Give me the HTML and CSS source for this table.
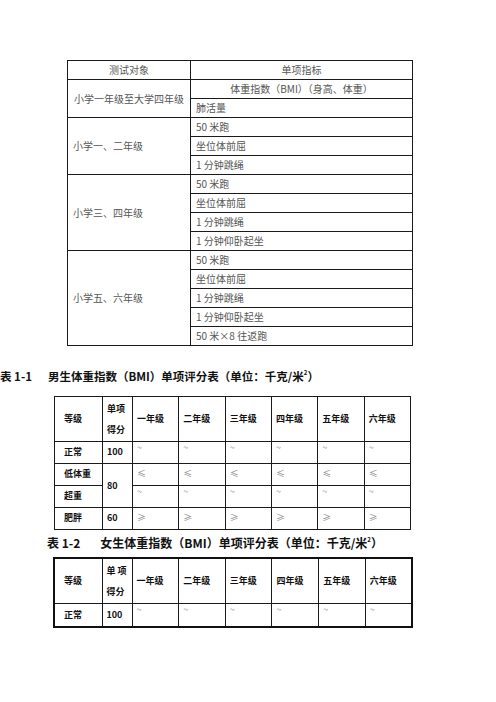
FILE: index.html
```html
<!DOCTYPE html>
<html lang="zh">
<head>
<meta charset="utf-8">
<title>体质测试</title>
<link rel="stylesheet" href="styles.css">
</head>
<body>
<table class="t1">
  <colgroup><col class="c-left"><col class="c-right"></colgroup>
  <tr><td class="ctr">测试对象</td><td class="ctr">单项指标</td></tr>
  <tr><td class="ctr" rowspan="2">小学一年级至大学四年级</td><td class="ctr">体重指数（BMI）（身高、体重）</td></tr>
  <tr><td>肺活量</td></tr>
  <tr><td rowspan="3">小学一、二年级</td><td>50 米跑</td></tr>
  <tr><td>坐位体前屈</td></tr>
  <tr><td>1 分钟跳绳</td></tr>
  <tr><td rowspan="4">小学三、四年级</td><td>50 米跑</td></tr>
  <tr><td>坐位体前屈</td></tr>
  <tr><td>1 分钟跳绳</td></tr>
  <tr><td>1 分钟仰卧起坐</td></tr>
  <tr><td rowspan="5">小学五、六年级</td><td>50 米跑</td></tr>
  <tr><td>坐位体前屈</td></tr>
  <tr><td>1 分钟跳绳</td></tr>
  <tr><td>1 分钟仰卧起坐</td></tr>
  <tr><td>50 米×8 往返跑</td></tr>
</table>

<div class="cap cap1"><span class="cap-no">表 1-1</span>男生体重指数（BMI）单项评分表（单位：千克/米<sup>2</sup>）</div>

<table class="t2">
  <colgroup><col class="g1"><col class="g2"><col class="g"><col class="g"><col class="g"><col class="g"><col class="g"><col class="g"></colgroup>
  <tr class="hd"><td class="first">等级</td><td class="two">单项<br>得分</td><td>一年级</td><td>二年级</td><td>三年级</td><td>四年级</td><td>五年级</td><td>六年级</td></tr>
  <tr><td class="first">正常</td><td>100</td><td class="v tl">~</td><td class="v tl">~</td><td class="v tl">~</td><td class="v tl">~</td><td class="v tl">~</td><td class="v tl">~</td></tr>
  <tr><td class="first">低体重</td><td rowspan="2">80</td><td class="v">≤</td><td class="v">≤</td><td class="v">≤</td><td class="v">≤</td><td class="v">≤</td><td class="v">≤</td></tr>
  <tr><td class="first">超重</td><td class="v tl">~</td><td class="v tl">~</td><td class="v tl">~</td><td class="v tl">~</td><td class="v tl">~</td><td class="v tl">~</td></tr>
  <tr><td class="first">肥胖</td><td>60</td><td class="v">≥</td><td class="v">≥</td><td class="v">≥</td><td class="v">≥</td><td class="v">≥</td><td class="v">≥</td></tr>
</table>

<div class="cap cap2"><span class="cap-no">表 1-2</span>女生体重指数（BMI）单项评分表（单位：千克/米<sup>2</sup>）</div>

<table class="t2 t3">
  <colgroup><col class="g1"><col class="g2"><col class="g"><col class="g"><col class="g"><col class="g"><col class="g"><col class="g"></colgroup>
  <tr class="hd"><td class="first">等级</td><td class="two">单 项<br>得分</td><td>一年级</td><td>二年级</td><td>三年级</td><td>四年级</td><td>五年级</td><td>六年级</td></tr>
  <tr><td class="first">正常</td><td>100</td><td class="v tl">~</td><td class="v tl">~</td><td class="v tl">~</td><td class="v tl">~</td><td class="v tl">~</td><td class="v tl">~</td></tr>
</table>
</body>
</html>
```

FILE: styles.css
```css
body {
  margin: 0;
  background: #ffffff;
  font-family: "Noto Sans CJK SC", sans-serif;
}

.t1 {
  border-collapse: collapse;
  table-layout: fixed;
  width: 346px;
  margin: 60px 0 0 67px;
  color: #555555;
  font-size: 10px;
}
.t1 .c-left { width: 123px; }
.t1 td {
  border: 1px solid #1a1a1a;
  height: 18px;
  padding: 0 0 0 5px;
  line-height: 12px;
  vertical-align: middle;
  white-space: nowrap;
}
.t1 td.ctr {
  text-align: center;
  padding: 0;
}

.cap {
  font-weight: bold;
  line-height: 14px;
  color: #111111;
  white-space: nowrap;
}
.cap sup {
  font-size: 6px;
  vertical-align: top;
  line-height: 8px;
}
.cap1 {
  font-size: 11.5px;
  margin: 23px 0 0 0;
}
.cap1 .cap-no { margin-right: 16px; }
.cap2 {
  font-size: 12px;
  margin: 6px 0 0 47px;
}
.cap2 .cap-no { margin-right: 20px; }

.t2 {
  border-collapse: collapse;
  table-layout: fixed;
  width: 357px;
  margin: 13px 0 0 54px;
  font-size: 9px;
  font-weight: bold;
  color: #111111;
}
.t2 .g1 { width: 48px; }
.t2 .g2 { width: 30px; }
.t2 td {
  border: 1px solid #1a1a1a;
  height: 20.5px;
  padding: 0 0 0 4px;
  line-height: 12px;
  vertical-align: middle;
  white-space: nowrap;
}
.t2 td.first { padding-left: 9px; }
.t2 .hd td { height: 43.5px; }
.t2 td.two { line-height: 21px; }
.t2 td.v {
  font-weight: normal;
  color: #888888;
}
.t2 td.tl {
  vertical-align: top;
  padding-top: 1px;
  line-height: 10px;
}

.t3 {
  margin: 7px 0 0 53px;
  width: 360px;
  border: 2px solid #111111;
}
.t3 .hd td { height: 44.5px; }
```
